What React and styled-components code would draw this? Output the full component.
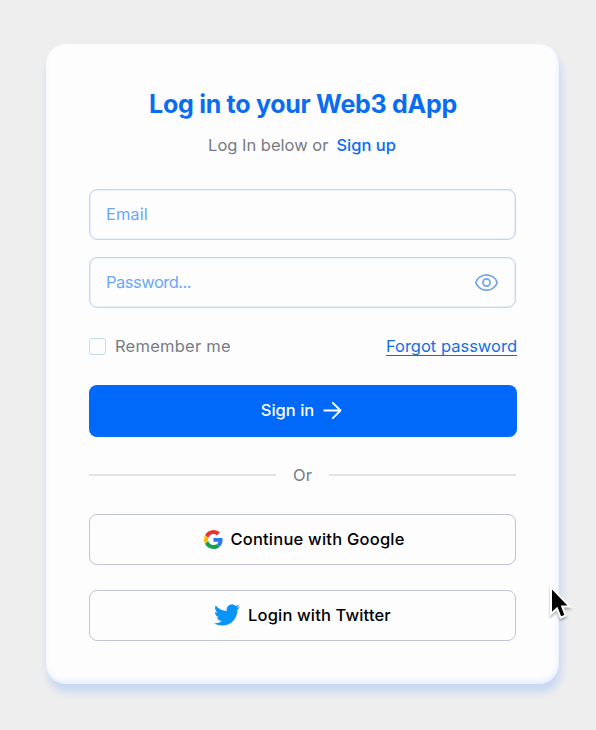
import React from "react";
import styled, { createGlobalStyle } from "styled-components";

const GlobalStyle = createGlobalStyle`
  * { box-sizing: border-box; }
  html, body { margin: 0; background: #eeeeee; }
  body { font-family: Inter, "Open Sans", sans-serif; }
  button, input { font-family: inherit; }
`;

const Page = styled.main`
  position: relative;
  width: 596px;
  height: 730px;
  padding: 44px 0 0 46px;
  overflow: hidden;
  background: #eeeeee;
`;

const Card = styled.form`
  width: 513px;
  height: 640px;
  padding: 43px 42px 43px 43px;
  border-radius: 20px;
  background: #fdfdfe;
  box-shadow: 2px 8px 9px rgba(0, 105, 255, 0.17), inset -1px -3px 5px rgba(0, 105, 255, 0.1);
  display: flex;
  flex-direction: column;
`;

const Title = styled.h1`
  margin: 0;
  height: 34px;
  line-height: 34px;
  text-align: center;
  white-space: nowrap;
  font-size: 25px;
  font-weight: 650;
  letter-spacing: ${(p) => p.$track}px;
  color: #0a6df0;
`;

const Subtitle = styled.p`
  margin: 12px 0 0;
  height: 24px;
  padding-right: 2px;
  line-height: 24px;
  display: flex;
  justify-content: center;
  gap: 8px;
  white-space: nowrap;
`;

const Label = styled.span`
  display: inline-block;
  font-size: 16.5px;
  line-height: 24px;
  font-weight: ${(p) => p.$weight || 400};
  letter-spacing: ${(p) => p.$track || 0}px;
  color: ${(p) => p.$color || "#777b84"};
  white-space: nowrap;
`;

const Field = styled.label`
  height: 51px;
  width: 427px;
  margin-top: ${(p) => p.$gap}px;
  padding: 0 16px;
  border: 1px solid #c3d6f3;
  box-shadow: inset 0 0 0 0.6px #d3e3f9;
  border-radius: 8px;
  display: flex;
  align-items: center;
  justify-content: space-between;
`;

const Input = styled.input`
  flex: 1;
  min-width: 0;
  padding: 0 0 2px;
  border: 0;
  outline: 0;
  background: transparent;
  font-size: 16.5px;
  letter-spacing: ${(p) => p.$track}px;
  &::placeholder { color: #6ca8f8; opacity: 1; }
`;

const Options = styled.div`
  margin-top: 26px;
  height: 24px;
  display: flex;
  align-items: center;
  justify-content: space-between;
`;

const Remember = styled.label`
  display: flex;
  align-items: center;
  gap: 9px;
`;

const Checkbox = styled.input`
  appearance: none;
  width: 17px;
  height: 17px;
  margin: 0;
  border: 1px solid #bedafb;
  border-radius: 3px;
`;

const Forgot = styled.a`
  height: 20px;
  line-height: 20px;
  border-bottom: 1px solid #0a6df0;
  color: #146fe4;
  font-size: 16.5px;
  letter-spacing: ${(p) => p.$track}px;
  white-space: nowrap;
`;

const Primary = styled.button`
  flex: none;
  height: 52px;
  margin-top: 27px;
  padding: 0 3px 2px 0;
  border: 0;
  border-radius: 8px;
  background: #0069fa;
  display: flex;
  align-items: center;
  justify-content: center;
  gap: 9px;
`;

const Divider = styled.div`
  height: 24px;
  width: 427px;
  margin-top: 26px;
  display: flex;
  align-items: center;
  gap: 17px;
`;

const Rule = styled.span`
  flex: 1;
  height: 2px;
  background: #e1e4e7;
`;

const Provider = styled.button`
  flex: none;
  width: 427px;
  height: 51px;
  margin-top: ${(p) => p.$gap}px;
  padding: 0 0 1px ${(p) => p.$inset || 0}px;
  border: 1px solid #c1c3d6;
  border-radius: 8px;
  background: transparent;
  display: flex;
  align-items: center;
  justify-content: center;
  gap: ${(p) => p.$iconGap}px;
`;

const Pointer = styled.svg`
  position: absolute;
  left: 547px;
  top: 583px;
  filter: drop-shadow(0 2px 1px rgba(0, 0, 0, 0.3));
`;

const EyeIcon = () => (
  <svg width="25" height="19" viewBox="0 0 25 19" fill="none" stroke="#6fa6ea" strokeWidth="1.7">
    <path d="M1.8 9.5C2.8 5.6 7.4 1.8 12.5 1.8S22.2 5.6 23.2 9.5C22.2 13.4 17.6 17.2 12.5 17.2S2.8 13.4 1.8 9.5Z" strokeLinejoin="round" />
    <circle cx="12.5" cy="9.5" r="3.6" />
  </svg>
);

const ArrowIcon = () => (
  <svg width="19" height="19" viewBox="0 0 19 19" fill="none" stroke="#fff" strokeWidth="1.9" strokeLinecap="round" strokeLinejoin="round">
    <path d="M1.2 9.5H17.5M9.8 1.8L17.5 9.5L9.8 17.2" />
  </svg>
);

const GoogleIcon = () => (
  <svg width="19" height="19" viewBox="0 0 48 48">
    <path fill="#EA3333" d="M24 10.2c3.4 0 6.3 1.2 8.7 3.4l7.4-7.35C35.9 2.38 30.47 0 24 0 14.62 0 6.51 5.38 2.56 13.22l8.3 6.6C12.7 14.2 17.9 10.2 24 10.2z" />
    <path fill="#2878EE" d="M46.98 24.55c0-1.57-.15-3.09-.38-4.55H24v9.5h12.5c-.6 2.6-2.1 4.9-4.4 6.5l7.85 6.2c4.51-4.18 7.03-10.36 7.03-17.65z" />
    <path fill="#FBBC05" d="M10.9 28.3c-.5-1.4-.8-2.8-.8-4.3s.3-2.9.8-4.3l-8.34-6.48C.92 16.46 0 20.12 0 24s.92 7.54 2.56 10.78l8.34-6.48z" />
    <path fill="#159E50" d="M24 48c6.48 0 11.93-2.13 15.89-5.81l-7.99-6.29c-2.1 1.3-4.8 2.1-7.9 2.1-6.1 0-11.3-4-13.1-9.7l-8.35 6.48C6.51 42.62 14.62 48 24 48z" />
  </svg>
);

const TwitterIcon = () => (
  <svg width="26" height="22" viewBox="0 2 24 20" fill="#0b93f6">
    <path d="M23.953 4.57a10 10 0 01-2.825.775 4.958 4.958 0 002.163-2.723c-.951.555-2.005.959-3.127 1.184a4.92 4.92 0 00-8.384 4.482C7.69 8.095 4.067 6.13 1.64 3.162a4.822 4.822 0 00-.666 2.475c0 1.71.87 3.213 2.188 4.096a4.904 4.904 0 01-2.228-.616v.06a4.923 4.923 0 003.946 4.827 4.996 4.996 0 01-2.212.085 4.936 4.936 0 004.604 3.417 9.867 9.867 0 01-6.102 2.105c-.39 0-.779-.023-1.17-.067a13.995 13.995 0 007.557 2.209c9.053 0 13.998-7.496 13.998-13.985 0-.21 0-.42-.015-.63A9.935 9.935 0 0024 4.59z" />
  </svg>
);

export default function App() {
  return (
    <Page>
      <GlobalStyle />
      <Card onSubmit={(e) => e.preventDefault()}>
        <Title $track={-0.28}>Log in to your Web3 dApp</Title>
        <Subtitle>
          <Label>Log In below or</Label>
          <Label as="a" $weight={500} $color="#0a6df0">Sign up</Label>
        </Subtitle>
        <Field $gap={32}>
          <Input placeholder="Email" $track={0} />
        </Field>
        <Field $gap={17}>
          <Input type="password" placeholder="Password..." $track={-0.5} />
          <EyeIcon />
        </Field>
        <Options>
          <Remember>
            <Checkbox type="checkbox" />
            <Label $track={0.24}>Remember me</Label>
          </Remember>
          <Forgot $track={0}>Forgot password</Forgot>
        </Options>
        <Primary>
          <Label $weight={500} $color="#fff">Sign in</Label>
          <ArrowIcon />
        </Primary>
        <Divider>
          <Rule />
          <Label>Or</Label>
          <Rule />
        </Divider>
        <Provider type="button" $gap={27} $iconGap={7} $inset={4}>
          <GoogleIcon />
          <Label $weight={500} $color="#000" $track={0.22}>Continue with Google</Label>
        </Provider>
        <Provider type="button" $gap={25} $iconGap={8}>
          <TwitterIcon />
          <Label $weight={500} $color="#000" $track={0.15}>Login with Twitter</Label>
        </Provider>
      </Card>
      <Pointer width="27" height="40" viewBox="0 0 27 40">
        <path d="M4 4V31L10 25.4L13.6 34.6L18.6 32.4L15.2 23.4H22.6Z" fill="#000" stroke="#fff" strokeWidth="2" />
      </Pointer>
    </Page>
  );
}
